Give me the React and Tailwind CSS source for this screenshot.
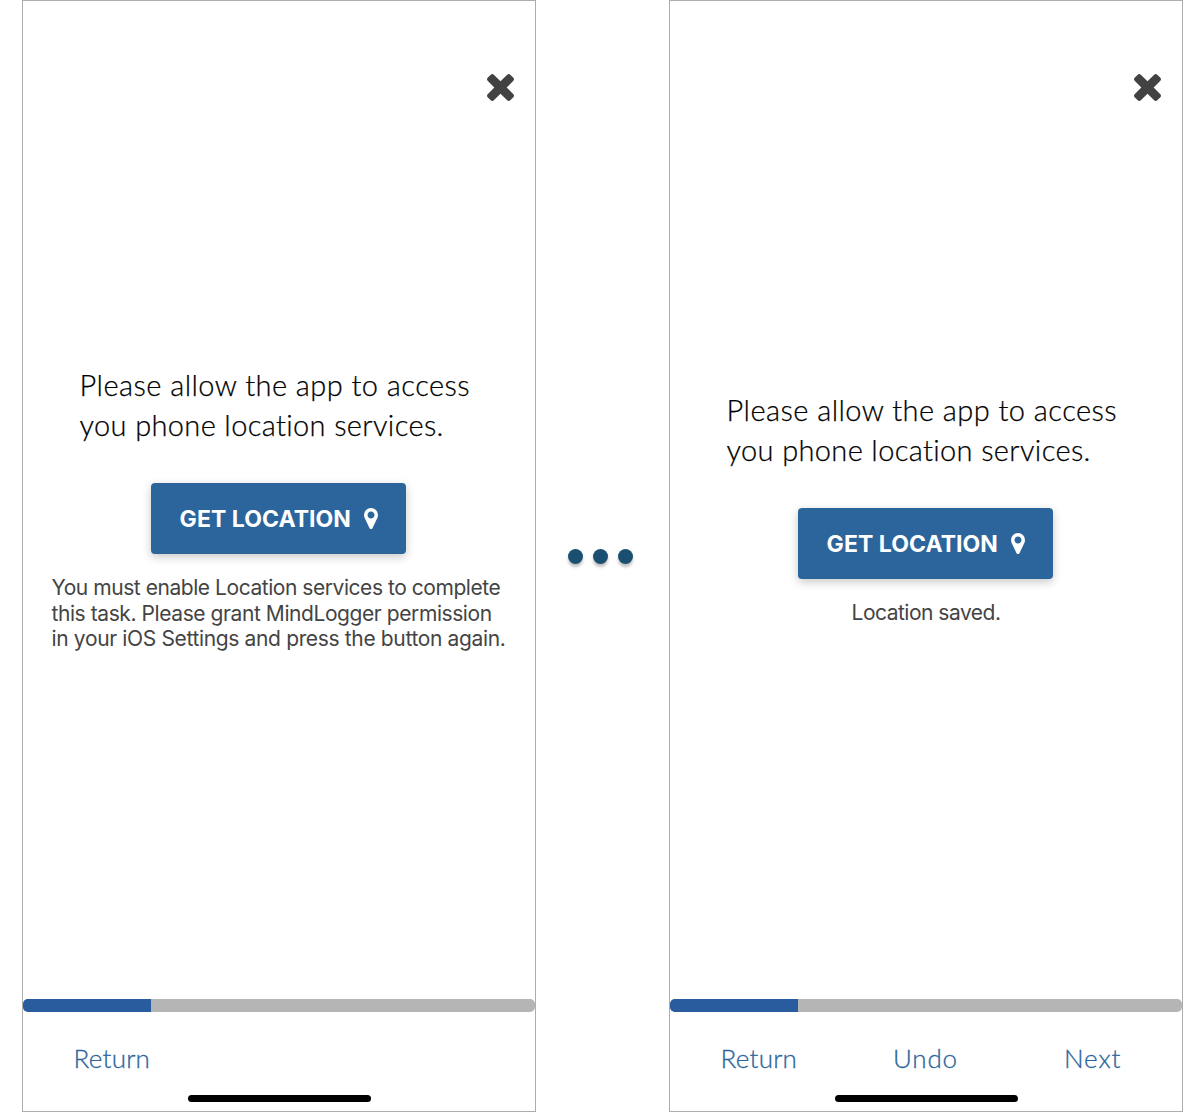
function CloseIcon() {
  return (
    <svg className="h-[27px] w-[27px]" viewBox="302 366 1188 1188" fill="#424242" aria-hidden="true">
      <path d="M1490 1322q0 40-28 68l-136 136q-28 28-68 28t-68-28l-294-294-294 294q-28 28-68 28t-68-28l-136-136q-28-28-28-68t28-68l294-294-294-294q-28-28-28-68t28-68l136-136q28-28 68-28t68 28l294 294 294-294q28-28 68-28t68 28l136 136q28 28 28 68t-28 68l-294 294 294 294q28 28 28 68z" />
    </svg>
  );
}

function MarkerIcon() {
  return (
    <svg className="h-[21px] w-[14px]" viewBox="384 128 1024 1536" fill="#fff" aria-hidden="true">
      <path d="M1152 640q0-106-75-181t-181-75-181 75-75 181 75 181 181 75 181-75 75-181zm256 0q0 109-33 179l-364 774q-16 33-47.5 52t-67.5 19-67.5-19-46.5-52l-365-774q-33-70-33-179 0-212 150-362t362-150 362 150 150 362z" />
    </svg>
  );
}

function Phone({ promptSpace, children, actions }) {
  return (
    <section className="flex h-[1112px] w-[514px] shrink-0 flex-col border border-[#adadad] bg-white">
      <header className="flex h-[100px] shrink-0 items-end justify-end pr-[21px]">
        <button aria-label="Close">
          <CloseIcon />
        </button>
      </header>
      <main className={`flex h-[898px] shrink-0 flex-col items-center ${promptSpace}`}>
        <h1 className="w-[399px] whitespace-nowrap font-['Lato',sans-serif] text-[29px] leading-[40px] font-light text-black [-webkit-text-stroke:0.25px_#000]">
          <span className="block tracking-[0.45px]">Please allow the app to access</span>
          <span className="block tracking-[0.36px]">you phone location services.</span>
        </h1>
        <button className="mt-[38px] mr-[0.5px] flex h-[71px] w-[255px] shrink-0 items-center justify-center gap-[13px] rounded-[4px] bg-[#2c659c] font-['Inter',sans-serif] text-[23px] font-[650] text-white shadow-[0_3px_10px_rgba(0,0,0,0.22)]">
          <span className="whitespace-nowrap pt-[1px] tracking-[0.05px]">GET LOCATION</span>
          <MarkerIcon />
        </button>
        <div className="mt-[21.4px] whitespace-nowrap font-['Inter',sans-serif] text-[21px] leading-[25.2px] font-[380] text-[#444]">
          {children}
        </div>
      </main>
      <div className="flex h-[13px] shrink-0 overflow-hidden rounded-[5px] bg-[#b5b5b5]">
        <div className="w-1/4 bg-[#285c9e]" />
      </div>
      <nav className="flex h-[83px] shrink-0 items-center pt-[10px] font-['Lato',sans-serif] text-[26px] font-light text-[#2c659c] [-webkit-text-stroke:0.3px_#2c659c]">
        {actions}
      </nav>
      <div className="mx-auto h-[7px] w-[183px] shrink-0 rounded-full bg-black" />
    </section>
  );
}

export default function App() {
  return (
    <div className="flex h-[1112px] w-[1200px] overflow-hidden bg-white pl-[22px]">
      <Phone
        promptSpace="pt-[264px]"
        actions={<button className="ml-[50.5px] tracking-[0.25px]">Return</button>}
      >
        <p className="w-[455px]">
          <span className="block tracking-[-0.45px]">You must enable Location services to complete</span>
          <span className="block tracking-[-0.42px]">this task. Please grant MindLogger permission</span>
          <span className="block tracking-[-0.35px]">in your iOS Settings and press the button again.</span>
        </p>
      </Phone>
      <div className="flex w-[133px] shrink-0 items-center justify-center gap-[10px] pr-[4px]">
        <i className="h-[15px] w-[15px] rounded-full bg-[#1b4f72] shadow-[0_3px_3px_rgba(0,0,0,0.25)]" />
        <i className="h-[15px] w-[15px] rounded-full bg-[#1b4f72] shadow-[0_3px_3px_rgba(0,0,0,0.25)]" />
        <i className="h-[15px] w-[15px] rounded-full bg-[#1b4f72] shadow-[0_3px_3px_rgba(0,0,0,0.25)]" />
      </div>
      <Phone
        promptSpace="pt-[289px]"
        actions={
          <>
            <button className="ml-[50.5px] w-[172.5px] text-left tracking-[0.25px]">Return</button>
            <button className="w-[171px] text-left tracking-[0.8px]">Undo</button>
            <button className="tracking-[0.9px]">Next</button>
          </>
        }
      >
        <p className="tracking-[-0.5px]">Location saved.</p>
      </Phone>
    </div>
  );
}
